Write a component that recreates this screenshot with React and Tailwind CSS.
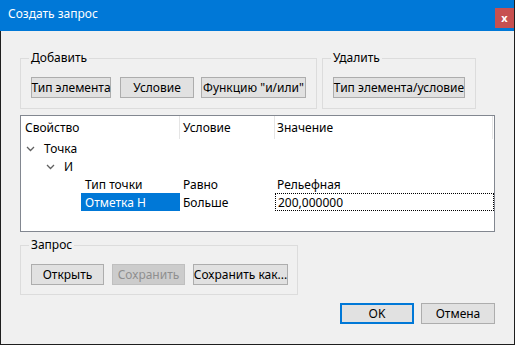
import React from 'react';

const FONT = { fontFamily: '"Noto Sans", "Open Sans", sans-serif' };

const Chevron = () => (
  <svg width="9" height="6" viewBox="0 0 9 6" className="shrink-0">
    <path d="M1 1 L4.5 4.5 L8 1" fill="none" stroke="#606060" strokeWidth="1.3" />
  </svg>
);

const Btn = ({ children, w, disabled }) => (
  <div
    className={`h-[21px] flex items-center justify-center border whitespace-nowrap ${
      disabled ? 'bg-[#cccccc] border-[#bfbfbf] text-[#8f8f8f]' : 'bg-[#e1e1e1] border-[#adadad] text-[#000]'
    } ${w}`}
  >
    {children}
  </div>
);

const Group = ({ label, className, children }) => (
  <div className={`relative border border-[#dcdcdc] ${className}`}>
    <span className="absolute left-[8px] -top-[9px] px-[2px] bg-[#f0f0f0] leading-[16px]">{label}</span>
    {children}
  </div>
);

const rows = [
  { prop: 'Тип точки', cond: 'Равно', val: 'Рельефная' },
  { prop: 'Отметка Н', cond: 'Больше', val: '200,000000', selected: true },
];

export default function App() {
  return (
    <div className="w-[515px] h-[345px] flex flex-col text-[12px] text-black select-none" style={FONT}>
      {/* Title bar */}
      <div className="h-[31px] bg-[#0078d7] flex items-start justify-between pl-[8px] border-r border-[#1e1e1e]">
        <span className="text-white text-[12px] leading-none mt-[8px]">Создать запрос</span>
        <div className="mt-[8px] w-[19px] h-[20px] bg-[#c75050] flex items-center justify-center text-white text-[11px] font-bold leading-none">
          <span className="-mt-[2px]">x</span>
        </div>
      </div>

      {/* Body */}
      <div className="flex-1 bg-[#f0f0f0] border-x border-b border-[#1e1e1e] px-[19px] flex flex-col">
        <div className="mt-[27px] flex gap-[5px]">
          <Group label="Добавить" className="w-[297px] h-[51px] pt-[18px] pl-[10px]">
            <div className="flex gap-[9px]">
              <Btn w="w-[80px]">Тип элемента</Btn>
              <Btn w="w-[74px]">Условие</Btn>
              <div className="-ml-[2px]">
                <Btn w="w-[105px]">Функцию "и/или"</Btn>
              </div>
            </div>
          </Group>
          <Group label="Удалить" className="w-[154px] h-[51px] pt-[18px] pl-[10px]">
            <Btn w="w-[132px]">Тип элемента/условие</Btn>
          </Group>
        </div>

        {/* List view */}
        <div className="mt-[6px] h-[117px] bg-white border border-[#828790]">
          <div className="h-[23px] flex items-center">
            <div className="w-[159px] pl-[4px] h-full flex items-center border-r border-[#e5e5e5]">Свойство</div>
            <div className="w-[95px] pl-[3px] h-full flex items-center border-r border-[#e5e5e5]">Условие</div>
            <div className="w-[218px] pl-[2px] h-full flex items-center border-r border-[#e5e5e5]">Значение</div>
          </div>
          <div className="h-[18px] flex items-center pl-[5px] gap-[9px] pt-[2px]">
            <Chevron />
            <span>Точка</span>
          </div>
          <div className="h-[18px] flex items-center pl-[25px] gap-[9px] pt-[2px]">
            <Chevron />
            <span>И</span>
          </div>
          {rows.map((r) => (
            <div key={r.prop} className="h-[18px] flex items-center">
              <div className="w-[60px]" />
              <div className={`w-[99px] h-full flex items-center pl-[4px] pt-[1px] ${r.selected ? 'bg-[#0078d7] text-white' : ''}`}>
                {r.prop}
              </div>
              <div className="w-[95px] pl-[3px] pt-[1px]">{r.cond}</div>
              <div
                className={`w-[219px] h-full flex items-center pl-[2px] pt-[1px] ${
                  r.selected ? 'border border-dotted border-black' : ''
                }`}
              >
                {r.val}
              </div>
            </div>
          ))}
        </div>

        <Group label="Запрос" className="mt-[13px] w-[278px] h-[50px] pt-[18px] pl-[10px]">
          <div className="flex gap-[8px]">
            <Btn w="w-[73px]">Открыть</Btn>
            <Btn w="w-[73px]" disabled>
              Сохранить
            </Btn>
            <Btn w="w-[95px]">Сохранить как...</Btn>
          </div>
        </Group>

        <div className="mt-[8px] flex justify-end gap-[7px]">
          <div className="w-[74px] h-[21px] flex items-center justify-center bg-[#e1e1e1] border-2 border-[#0078d7]">
            OK
          </div>
          <Btn w="w-[74px]">Отмена</Btn>
        </div>
      </div>
    </div>
  );
}
